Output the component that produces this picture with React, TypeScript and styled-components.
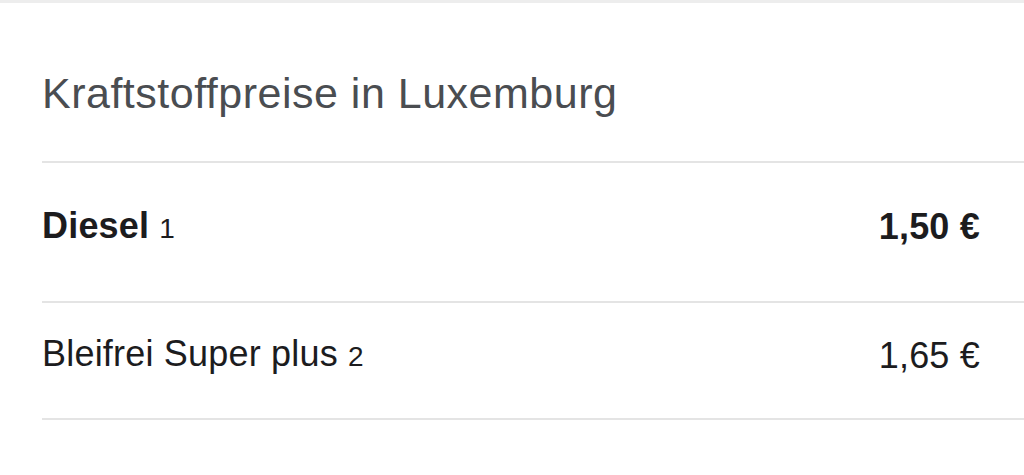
import React from "react";
import styled, { createGlobalStyle } from "styled-components";

const GlobalStyle = createGlobalStyle`
  html, body {
    margin: 0;
    padding: 0;
    background: #ffffff;
  }
  body {
    font-family: "Liberation Sans", Arial, Helvetica, sans-serif;
  }
`;

const Page = styled.div`
  width: 1024px;
  height: 475px;
  overflow: hidden;
  background: #ffffff;
  border-top: 3px solid #ededed;
  box-sizing: border-box;
`;

const Section = styled.section`
  padding-left: 42px;
`;

const Header = styled.div`
  padding: 66px 0 44px;
  border-bottom: 2px solid #e4e4e4;
`;

const Title = styled.h2`
  margin: 0;
  font-size: 43px;
  line-height: 48px;
  font-weight: 400;
  letter-spacing: 0.5px;
  color: #4a4d51;
`;

const List = styled.ul`
  list-style: none;
  margin: 0;
  padding: 0;
`;

const Row = styled.li<{ $height: number }>`
  display: flex;
  align-items: center;
  justify-content: space-between;
  height: ${(p) => p.$height}px;
  padding: 0 44px 10px 0;
  box-sizing: border-box;
  border-bottom: 2px solid #e4e4e4;
  font-size: 36px;
  line-height: 40px;
  letter-spacing: 0.2px;
  color: #1c1c1e;
`;

const Label = styled.span<{ $bold?: boolean }>`
  font-weight: ${(p) => (p.$bold ? 700 : 400)};
`;

const Note = styled.span`
  font-size: 28px;
  font-weight: 400;
  margin-left: 10px;
`;

const Price = styled.span<{ $bold?: boolean }>`
  font-weight: ${(p) => (p.$bold ? 700 : 400)};
`;

type Fuel = {
  name: string;
  note: number;
  price: string;
  bold?: boolean;
  height: number;
};

const fuels: Fuel[] = [
  { name: "Diesel", note: 1, price: "1,50 €", bold: true, height: 140 },
  { name: "Bleifrei Super plus", note: 2, price: "1,65 €", height: 117 },
];

export default function App() {
  return (
    <>
      <GlobalStyle />
      <Page>
        <Section>
          <Header>
            <Title>Kraftstoffpreise in Luxemburg</Title>
          </Header>
          <List>
            {fuels.map((f) => (
              <Row key={f.name} $height={f.height}>
                <Label $bold={f.bold}>
                  {f.name}
                  <Note>{f.note}</Note>
                </Label>
                <Price $bold={f.bold}>{f.price}</Price>
              </Row>
            ))}
          </List>
        </Section>
      </Page>
    </>
  );
}
